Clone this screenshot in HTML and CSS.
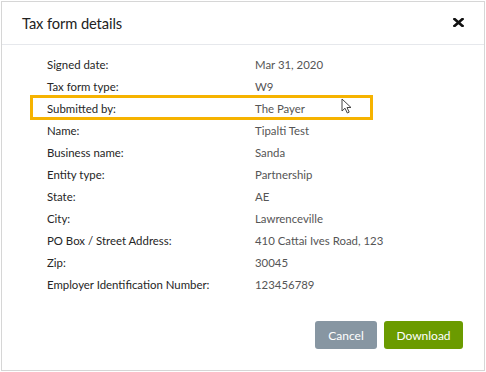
FILE: index.html
```html
<!DOCTYPE html>
<html lang="en">
<head>
    <meta charset="utf-8">
    <title>Tax form details</title>
    <link rel="stylesheet" href="styles.css">
</head>
<body>
    <div class="modal">
        <div class="modal-header">
            <h2 class="modal-title">Tax form details</h2>
            <button class="close-btn" aria-label="Close">
                <svg width="11" height="9" viewBox="0 0 11 9">
                    <path d="M1.5 1 L9.5 8 M9.5 1 L1.5 8" stroke="#111" stroke-width="2.6" stroke-linecap="square"/>
                </svg>
            </button>
        </div>

        <div class="modal-body">
            <div class="detail-row">
                <span class="detail-label">Signed date:</span>
                <span class="detail-value">Mar 31, 2020</span>
            </div>
            <div class="detail-row">
                <span class="detail-label">Tax form type:</span>
                <span class="detail-value">W9</span>
            </div>
            <!-- highlighted row -->
            <div class="detail-row highlighted">
                <span class="detail-label">Submitted by:</span>
                <span class="detail-value">The Payer</span>
                <svg class="cursor" width="12" height="16" viewBox="0 0 12 16">
                    <path d="M1 1 L1 13 L4 10.2 L6.3 15 L8.2 14.1 L6 9.5 L10 9.5 Z" fill="#fff" stroke="#444" stroke-width="1" stroke-linejoin="round"/>
                </svg>
            </div>
            <div class="detail-row">
                <span class="detail-label">Name:</span>
                <span class="detail-value">Tipalti Test</span>
            </div>
            <div class="detail-row">
                <span class="detail-label">Business name:</span>
                <span class="detail-value">Sanda</span>
            </div>
            <div class="detail-row">
                <span class="detail-label">Entity type:</span>
                <span class="detail-value">Partnership</span>
            </div>
            <div class="detail-row">
                <span class="detail-label">State:</span>
                <span class="detail-value">AE</span>
            </div>
            <div class="detail-row">
                <span class="detail-label">City:</span>
                <span class="detail-value">Lawrenceville</span>
            </div>
            <div class="detail-row">
                <span class="detail-label">PO Box / Street Address:</span>
                <span class="detail-value">410 Cattai Ives Road, 123</span>
            </div>
            <div class="detail-row">
                <span class="detail-label">Zip:</span>
                <span class="detail-value">30045</span>
            </div>
            <div class="detail-row">
                <span class="detail-label">Employer Identification Number:</span>
                <span class="detail-value">123456789</span>
            </div>
        </div>

        <div class="modal-footer">
            <button class="btn btn-cancel">Cancel</button>
            <button class="btn btn-download">Download</button>
        </div>
    </div>
</body>
</html>
```

FILE: styles.css
```css
body {
    margin: 0;
    background-color: #fff;
    font-family: Lato, "Open Sans", Arial, sans-serif;
}
.modal {
    width: 484px;
    height: 370px;
    margin: 1px 0 0 1px;
    box-sizing: border-box;
    border: 1px solid #d6d6d6;
    background-color: #fff;
    display: flex;
    flex-direction: column;
}
.modal-header {
    height: 43px;
    box-sizing: border-box;
    border-bottom: 1px solid #e6e8ec;
    display: flex;
    align-items: center;
    justify-content: space-between;
    padding: 0 20px 0 20px;
}
.modal-title {
    margin: 0;
    font-size: 14.7px;
    font-weight: 400;
    color: #222;
    letter-spacing: -0.1px;
}
.close-btn {
    background: none;
    border: none;
    padding: 0;
    margin-top: -2px;
    cursor: pointer;
    display: flex;
}
.modal-body {
    padding: 8px 0 0 45px;
}
.detail-row {
    display: flex;
    height: 22px;
    align-items: center;
    font-size: 11.4px;
    position: relative;
}
.detail-label {
    width: 208px;
    color: #262626;
}
.detail-value {
    color: #555;
}
.highlighted::after {
    content: "";
    position: absolute;
    left: -17px;
    top: -2px;
    width: 343px;
    height: 25px;
    box-sizing: border-box;
    border: 3px solid #f6b300;
}
.cursor {
    position: absolute;
    left: 294px;
    top: 1px;
}
.modal-footer {
    margin-top: auto;
    display: flex;
    justify-content: flex-end;
    gap: 7px;
    padding: 0 21px 21px 0;
}
.btn {
    height: 28px;
    border: none;
    border-radius: 3px;
    color: #fff;
    font-family: Lato, "Open Sans", Arial, sans-serif;
    font-size: 12px;
    cursor: pointer;
}
.btn-cancel {
    width: 62px;
    background-color: #8796a2;
}
.btn-download {
    width: 79px;
    background-color: #6b9b00;
}
```
